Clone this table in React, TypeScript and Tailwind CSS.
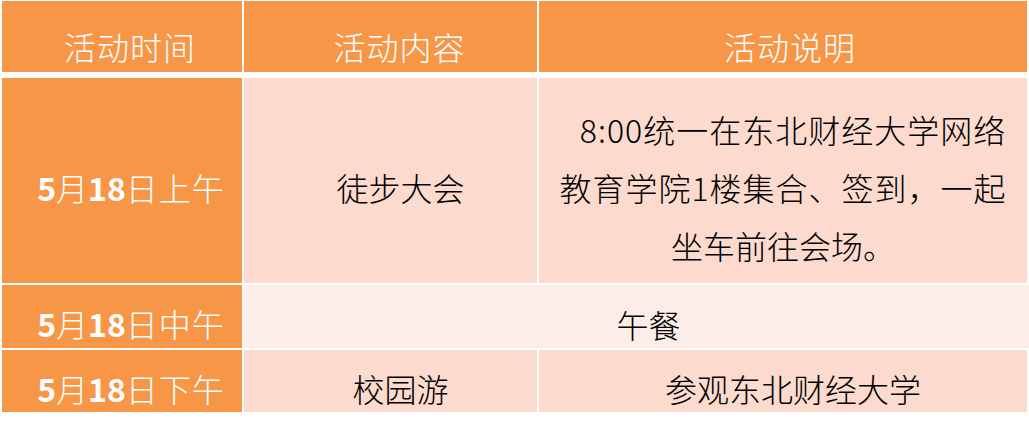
const font = { fontFamily: '"Noto Sans CJK SC", "Noto Sans", sans-serif' }

function DateCell({ day, part }: { day: string; part: string }) {
  return (
    <div className="flex items-center justify-center bg-[#F79646] pl-[18px] pt-[13px] text-[32px] leading-none text-white">
      <span className="font-bold">5</span>
      <span className="font-light">月</span>
      <span className="font-bold">{day}</span>
      <span className="font-light tracking-[1px]">日{part}</span>
    </div>
  )
}

export default function App() {
  return (
    <div className="min-h-[429px] w-[1029px] bg-white pl-[2px] pt-[1px]" style={font}>
      <div className="flex w-[1025px] flex-col gap-[2px] font-light">
        {/* Header */}
        <div className="mb-[4px] grid h-[71px] grid-cols-[240px_293px_488px] gap-[2px] text-[32px] leading-none text-white">
          <div className="flex items-center justify-center bg-[#F79646] pl-[16px] pt-[19px] tracking-[1px]">活动时间</div>
          <div className="flex items-center justify-center bg-[#F79646] pl-[18px] pt-[19px] tracking-[1px]">活动内容</div>
          <div className="flex items-center justify-center bg-[#F79646] pl-[14px] pt-[19px] tracking-[1px]">活动说明</div>
        </div>

        {/* Morning */}
        <div className="grid h-[205px] grid-cols-[240px_293px_488px] gap-[2px]">
          <DateCell day="18" part="上午" />
          <div className="flex items-center justify-center bg-[#FCDACE] pl-[20px] pt-[13px] text-[32px] leading-none text-black">
            徒步大会
          </div>
          <div className="flex flex-col items-center justify-center bg-[#FCDACE] pt-[13px] text-center text-[32px] leading-[58px] text-black">
            <div className="pl-[20px] tracking-[1px]">8:00统一在东北财经大学网络</div>
            <div className="tracking-[1px]">教育学院1楼集合、签到，一起</div>
            <div>坐车前往会场。</div>
          </div>
        </div>

        {/* Noon */}
        <div className="grid h-[63px] grid-cols-[240px_785px] gap-[2px]">
          <DateCell day="18" part="中午" />
          <div className="flex items-center justify-center bg-[#FDEDE8] pl-[24px] pt-[15px] text-[32px] leading-none text-black">
            午餐
          </div>
        </div>

        {/* Afternoon */}
        <div className="grid h-[62px] grid-cols-[240px_293px_488px] gap-[2px]">
          <DateCell day="18" part="下午" />
          <div className="flex items-center justify-center bg-[#FCDACE] pl-[20px] pt-[13px] text-[32px] leading-none text-black">
            校园游
          </div>
          <div className="flex items-center justify-center bg-[#FCDACE] pl-[20px] pt-[13px] text-[32px] leading-none text-black">
            参观东北财经大学
          </div>
        </div>
      </div>
    </div>
  )
}
